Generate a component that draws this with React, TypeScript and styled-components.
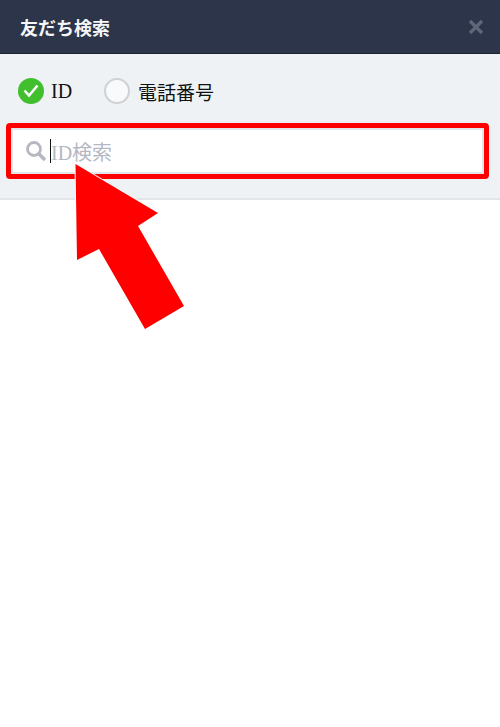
import React from "react";
import styled, { createGlobalStyle } from "styled-components";

const GlobalStyle = createGlobalStyle`
  html, body {
    margin: 0;
    padding: 0;
    background: #fff;
  }
  body {
    font-family: "Liberation Serif", "Noto Sans CJK JP", serif;
  }
`;

const Page = styled.div`
  position: relative;
  width: 500px;
  height: 727px;
  overflow: hidden;
  background: #fff;
`;

const Header = styled.header`
  display: flex;
  align-items: center;
  justify-content: space-between;
  box-sizing: border-box;
  height: 54px;
  padding: 0 16px 0 20px;
  background: #2c3549;
  border-bottom: 1px solid #1d2330;
`;

const Title = styled.h1`
  margin: 0;
  font-family: "Noto Sans CJK JP", sans-serif;
  font-size: 18px;
  font-weight: 700;
  color: #f4f6f8;
`;

const CloseButton = styled.button`
  display: flex;
  padding: 0;
  border: 0;
  background: none;
`;

const Panel = styled.section`
  box-sizing: border-box;
  height: 146px;
  padding: 23px 6px 0;
  background: #eef2f5;
  border-bottom: 2px solid #e2e5e9;
`;

const RadioRow = styled.div`
  display: flex;
  align-items: center;
  gap: 32px;
  height: 28px;
  padding-left: 12px;
`;

const RadioLabel = styled.label`
  display: flex;
  align-items: center;
  gap: 7px;
  font-family: "Liberation Serif", "Noto Sans CJK JP", serif;
  font-size: 19px;
  color: #111;
`;

const IdText = styled.span`
  font-size: 20px;
`;

const RadioMark = styled.span<{ $checked?: boolean }>`
  display: flex;
  align-items: center;
  justify-content: center;
  box-sizing: border-box;
  width: 26px;
  height: 26px;
  border-radius: 50%;
  background: ${(p) => (p.$checked ? "#41bf2f" : "#f9fafb")};
  border: 2px solid ${(p) => (p.$checked ? "#41bf2f" : "#cfd1d4")};
`;

const PhoneMark = styled(RadioMark)`
  margin-right: 1px;
`;

const Highlight = styled.div`
  box-sizing: border-box;
  width: 483px;
  height: 56px;
  margin-top: 18px;
  border: 5px solid #fe0000;
  border-radius: 4px;
`;

const SearchField = styled.div`
  display: flex;
  align-items: center;
  box-sizing: border-box;
  height: 100%;
  padding-left: 12px;
  background: #fff;
  border: 2px solid #e2e5ea;
`;

const Caret = styled.span`
  width: 1px;
  height: 24px;
  margin-left: 3px;
  background: #111;
`;

const Placeholder = styled.span`
  font-family: "Liberation Serif", "Noto Sans CJK JP", serif;
  font-size: 20px;
  color: #b3b8c3;
`;

const Arrow = styled.svg`
  position: absolute;
  left: 0;
  top: 0;
  pointer-events: none;
`;

export default function App() {
  return (
    <Page>
      <GlobalStyle />
      <Header>
        <Title>友だち検索</Title>
        <CloseButton>
          <svg width="16" height="16" viewBox="0 0 16 16">
            <path d="M2 2 14 14M14 2 2 14" stroke="#5c6779" strokeWidth="3.4" />
          </svg>
        </CloseButton>
      </Header>
      <Panel>
        <RadioRow>
          <RadioLabel>
            <RadioMark $checked>
              <svg width="16" height="14" viewBox="0 0 16 14">
                <path d="M1.5 6.5 6 11.5 14.5 1.5" fill="none" stroke="#fff" strokeWidth="2.5" />
              </svg>
            </RadioMark>
            <IdText>ID</IdText>
          </RadioLabel>
          <RadioLabel>
            <PhoneMark />
            電話番号
          </RadioLabel>
        </RadioRow>
        <Highlight>
          <SearchField>
            <svg width="22" height="22" viewBox="0 0 22 22">
              <circle cx="9" cy="9" r="6.5" fill="none" stroke="#b5b8c0" strokeWidth="2.8" />
              <path d="M14 14 20 20" stroke="#b5b8c0" strokeWidth="3.6" />
            </svg>
            <Caret />
            <Placeholder>ID検索</Placeholder>
          </SearchField>
        </Highlight>
      </Panel>
      <Arrow width="500" height="340" viewBox="0 0 500 340">
        <path
          d="M75.5 164 158 213 138 226 184 306 145 329 99 249 77 260Z"
          fill="#fe0000"
          stroke="#fff"
          strokeWidth="2"
          style={{ paintOrder: "stroke" }}
        />
      </Arrow>
    </Page>
  );
}
